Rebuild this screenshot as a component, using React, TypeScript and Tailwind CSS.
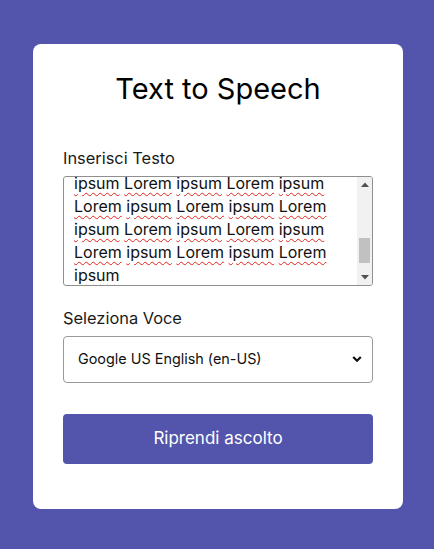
const lines = [
  "ipsum Lorem ipsum Lorem ipsum",
  "Lorem ipsum Lorem ipsum Lorem",
  "ipsum Lorem ipsum Lorem ipsum",
  "Lorem ipsum Lorem ipsum Lorem",
  "ipsum",
];

function Word({ text }: { text: string }) {
  return (
    <span className="underline decoration-wavy decoration-[#e0241a] decoration-1 underline-offset-[3px]">
      {text}
    </span>
  );
}

export default function App() {
  return (
    <div
      className="flex min-h-screen items-center justify-center bg-[#5355ac] pl-[2px] pt-[3px]"
      style={{ fontFamily: "Inter, 'Noto Sans', sans-serif" }}
    >
      <div className="w-[370px] rounded-lg bg-white px-[30px] pt-[27px] pb-[45px]">
        <h1 className="text-center text-[29px] leading-[36px] text-black">
          Text to Speech
        </h1>

        <label className="mt-[39px] block text-[16.4px] leading-[24px] text-[#1a1a1a]">
          Inserisci Testo
        </label>
        <div className="mt-[6px] flex h-[110px] overflow-hidden rounded-[3px] border border-[#8f8f8f]">
          <div className="flex-1 overflow-hidden px-[10px] text-[16px] leading-[23px] text-[#111]">
            <div className="-mt-[5px]">
              {lines.map((line, i) => (
                <div key={i} className="whitespace-nowrap">
                  {line.split(" ").map((w, j) => (
                    <span key={j}>
                      {j > 0 ? " " : ""}
                      <Word text={w} />
                    </span>
                  ))}
                </div>
              ))}
            </div>
          </div>
          {/* classic scrollbar look */}
          <div className="flex w-[15px] flex-col bg-[#f1f1f1]">
            <div className="flex h-[15px] items-center justify-center">
              <svg width="8" height="5" viewBox="0 0 8 5">
                <path d="M0 5 L4 0.5 L8 5 Z" fill="#505050" />
              </svg>
            </div>
            <div className="flex flex-1 flex-col justify-end px-[2px] pb-[7px]">
              <div className="h-[25px] bg-[#c1c1c1]" />
            </div>
            <div className="flex h-[15px] items-center justify-center">
              <svg width="8" height="5" viewBox="0 0 8 5">
                <path d="M0 0 L4 4.5 L8 0 Z" fill="#505050" />
              </svg>
            </div>
          </div>
        </div>

        <label className="mt-[20px] block text-[16.4px] leading-[24px] text-[#1a1a1a]">
          Seleziona Voce
        </label>
        <div className="relative mt-[6px]">
          <select
            defaultValue="en-US"
            className="h-[47px] w-full appearance-none rounded-[4px] border border-[#9a9a9a] bg-white pl-[14px] text-[14.4px] text-[#111] outline-none"
          >
            <option value="en-US">Google US English (en-US)</option>
          </select>
          <svg
            className="pointer-events-none absolute right-[11px] top-1/2 -translate-y-1/2"
            width="10"
            height="7"
            viewBox="0 0 10 7"
          >
            <path d="M1.2 1.5 L5 5.3 L8.8 1.5" stroke="#111" strokeWidth="2.2" fill="none" />
          </svg>
        </div>

        <button
          type="button"
          className="mt-[31px] h-[50px] w-full rounded-[4px] bg-[#5355ac] text-[17px] text-white"
        >
          Riprendi ascolto
        </button>
      </div>
    </div>
  );
}
